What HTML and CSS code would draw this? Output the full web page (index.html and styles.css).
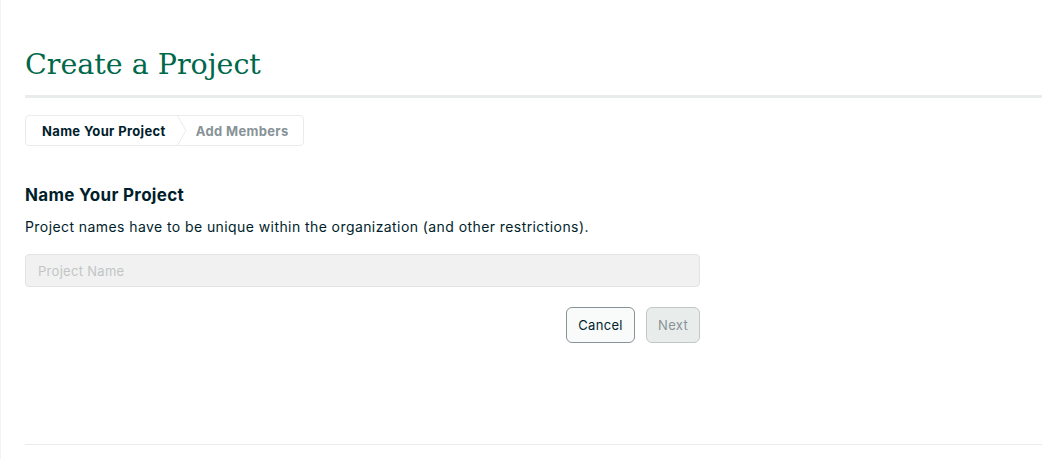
FILE: index.html
```html
<!DOCTYPE html>
<html>
<head>
<meta charset="utf-8">
<link rel="stylesheet" href="styles.css">
</head>
<body>
<div class="page">
  <header class="page-header">
    <h1 class="title">Create a Project</h1>
  </header>
  <nav class="steps">
    <div class="step step-active">Name Your Project</div>
    <svg class="step-sep" width="12" height="31" viewBox="0 0 12 31"><path d="M1 0 L10 15.5 L1 31" fill="none" stroke="#E8EDEB" stroke-width="1"/></svg>
    <div class="step step-todo">Add Members</div>
  </nav>
  <section class="form">
    <h2 class="form-title">Name Your Project</h2>
    <p class="form-desc">Project names have to be unique within the organization (and other restrictions).</p>
    <input class="form-input" type="text" placeholder="Project Name">
    <div class="actions">
      <button class="btn btn-cancel">Cancel</button>
      <button class="btn btn-next">Next</button>
    </div>
  </section>
  <div class="spacer"></div>
  <div class="footer-line"></div>
</div>
</body>
</html>
```
FILE: styles.css
```css
* { box-sizing: border-box; }
html, body { margin: 0; padding: 0; background: #fff; }
body {
  font-family: "Inter", "Noto Sans", sans-serif;
  color: #001E2B;
  height: 459px;
  overflow: hidden;
  border-left: 1px solid #F2F4F4;
}
.page {
  padding: 0 0 0 24px;
  display: flex;
  flex-direction: column;
  height: 459px;
}
.page-header {
  padding-top: 45px;
  border-bottom: 3px solid #E8EDEB;
  padding-bottom: 10px;
}
.title {
  margin: 0;
  font-family: "DejaVu Serif", serif;
  font-weight: 400;
  font-size: 28.5px;
  line-height: 40px;
  color: #00684A;
}
.steps {
  margin-top: 17px;
  display: flex;
  align-items: center;
  align-self: flex-start;
  border: 1px solid #E8EDEB;
  border-radius: 4px;
  height: 31px;
  padding: 0 14px 0 16px;
}
.step {
  font-size: 13px;
  font-weight: 700;
  letter-spacing: 0.35px;
}
.step-active { color: #001E2B; }
.step-todo { color: #889397; }
.step-sep { margin: 0 8px 0 10px; display: block; }
.form { margin-top: 38px; width: 675px; }
.form-title {
  margin: 0;
  font-size: 17px;
  font-weight: 700;
  line-height: 22px;
  letter-spacing: 0.3px;
}
.form-desc {
  margin: 11px 0 0;
  font-size: 14px;
  line-height: 20px;
  letter-spacing: 0.42px;
}
.form-input {
  display: block;
  margin-top: 17px;
  width: 675px;
  height: 33px;
  border: 1px solid #E1E4E4;
  border-radius: 4px;
  background: #F1F1F1;
  padding: 0 12px;
  font-family: inherit;
  font-size: 13px;
  letter-spacing: 0.3px;
}
.form-input::placeholder { color: #C1C5C6; }
.actions {
  margin-top: 20px;
  display: flex;
  justify-content: flex-end;
  gap: 11px;
}
.btn {
  height: 36px;
  border-radius: 6px;
  font-family: inherit;
  font-size: 13px;
  letter-spacing: 0.3px;
  padding: 0;
}
.btn-cancel {
  width: 69px;
  border: 1px solid #889397;
  background: #F9FBFA;
  color: #001E2B;
}
.btn-next {
  width: 54px;
  border: 1px solid #C1C7C6;
  background: #E8EDEB;
  color: #889397;
}
.spacer { flex: 1; }
.footer-line {
  border-top: 1px solid #E8EDEB;
  margin-bottom: 14px;
}
```
